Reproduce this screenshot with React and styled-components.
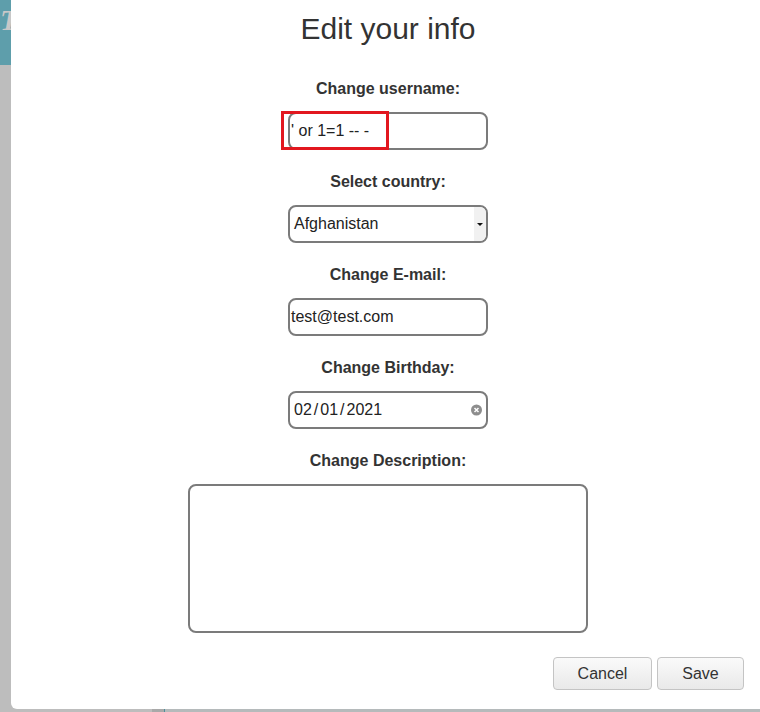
import React from "react";
import styled, { createGlobalStyle } from "styled-components";

const Global = createGlobalStyle`
  html, body { margin: 0; padding: 0; }
  body {
    width: 760px; height: 712px; overflow: hidden;
    background: #b6b6b6;
    font-family: "Liberation Sans", Arial, sans-serif;
  }
  #root { width: 760px; height: 712px; position: relative; }
`;

const Page = styled.div`
  width: 760px;
  height: 712px;
  display: grid;
  grid-template-rows: 65px 1fr;
`;

const Header = styled.div`
  background: #5e9eab;
  color: #c8c8c8;
  font: italic bold 30px "Liberation Serif", serif;
  line-height: 40px;
  overflow: hidden;
`;

const Body = styled.div`
  display: grid;
  grid-template-columns: 152px 13px 1fr;
`;

const Strip = styled.div`
  height: 100%;
  background: ${(p) => p.$bg};
  border-right: ${(p) => (p.$edge ? "1px solid #4f8f9b" : "none")};
`;

const Modal = styled.div`
  position: absolute;
  left: 11px;
  top: -6px;
  width: 754px;
  height: 715px;
  background: #fff;
  border-radius: 6px;
  display: flex;
  flex-direction: column;
  align-items: center;
  box-sizing: border-box;
  padding-top: 15px;
`;

const Title = styled.h1`
  margin: 0;
  font-weight: normal;
  font-size: 30px;
  line-height: 40px;
  color: #333;
`;

const Form = styled.div`
  display: flex;
  flex-direction: column;
  align-items: center;
  gap: 22px;
  margin-top: 30px;
`;

const Group = styled.div`
  display: flex;
  flex-direction: column;
  align-items: center;
`;

const Label = styled.label`
  font-weight: bold;
  font-size: 16px;
  line-height: 20px;
  color: #333;
  margin-bottom: 13px;
`;

const Field = styled.div`
  position: relative;
  box-sizing: border-box;
  width: ${(p) => p.$w || 200}px;
  height: ${(p) => p.$h || 38}px;
  border: 2px solid #7b7b7b;
  border-radius: 8px;
  background: #fff;
  display: flex;
  align-items: ${(p) => (p.$top ? "flex-start" : "center")};
  padding-left: ${(p) => p.$pl ?? 1}px;
  font-size: 16px;
  color: #222;
`;

const Highlight = styled.div`
  position: absolute;
  left: -9px;
  top: -3px;
  width: 108px;
  height: 39px;
  box-sizing: border-box;
  border: 3px solid #e2171f;
  pointer-events: none;
`;

const Arrow = styled.div`
  position: absolute;
  right: 0;
  top: 0;
  bottom: 0;
  width: 12px;
  background: #f1f1f1;
  border-radius: 0 6px 6px 0;
  display: flex;
  align-items: center;
  justify-content: center;
  &::after {
    content: "";
    border-left: 3px solid transparent;
    border-right: 3px solid transparent;
    border-top: 3px solid #111;
  }
`;

const Slash = styled.span`
  margin: 0 2px;
`;

const Clear = styled.div`
  position: absolute;
  right: 4px;
  top: 50%;
  transform: translateY(-50%);
  width: 11px;
  height: 11px;
  border-radius: 50%;
  background: #8d8d8d;
  display: flex;
  align-items: center;
  justify-content: center;
`;

const Footer = styled.div`
  align-self: flex-end;
  display: flex;
  gap: 5px;
  margin-top: 24px;
  padding-right: 21px;
`;

const Button = styled.button`
  box-sizing: border-box;
  width: ${(p) => p.$w}px;
  height: 33px;
  border: 1px solid #c4c4c4;
  border-radius: 4px;
  background: linear-gradient(#fafafa, #e9e9e9);
  font-family: "Liberation Sans", Arial, sans-serif;
  font-size: 16px;
  color: #333;
  padding: 0;
`;

export default function App() {
  return (
    <>
      <Global />
      <Page>
        <Header>T</Header>
        <Body>
          <Strip $bg="#bdbdbd" />
          <Strip $bg="#a9a9a9" $edge />
          <Strip $bg="#b5babb" />
        </Body>
      </Page>
      <Modal>
        <Title>Edit your info</Title>
        <Form>
          <Group>
            <Label>Change username:</Label>
            <Field>
              ' or 1=1 -- -
              <Highlight />
            </Field>
          </Group>
          <Group>
            <Label>Select country:</Label>
            <Field $pl={4}>
              Afghanistan
              <Arrow />
            </Field>
          </Group>
          <Group>
            <Label>Change E-mail:</Label>
            <Field>test@test.com</Field>
          </Group>
          <Group>
            <Label>Change Birthday:</Label>
            <Field $pl={4}>
              02<Slash>/</Slash>01<Slash>/</Slash>2021
              <Clear>
                <svg width="7" height="7" viewBox="0 0 7 7">
                  <path d="M1.5 1.5L5.5 5.5M5.5 1.5L1.5 5.5" stroke="#fff" strokeWidth="1.5" />
                </svg>
              </Clear>
            </Field>
          </Group>
          <Group>
            <Label>Change Description:</Label>
            <Field $w={400} $h={149} $top />
          </Group>
        </Form>
        <Footer>
          <Button $w={99}>Cancel</Button>
          <Button $w={87}>Save</Button>
        </Footer>
      </Modal>
    </>
  );
}
